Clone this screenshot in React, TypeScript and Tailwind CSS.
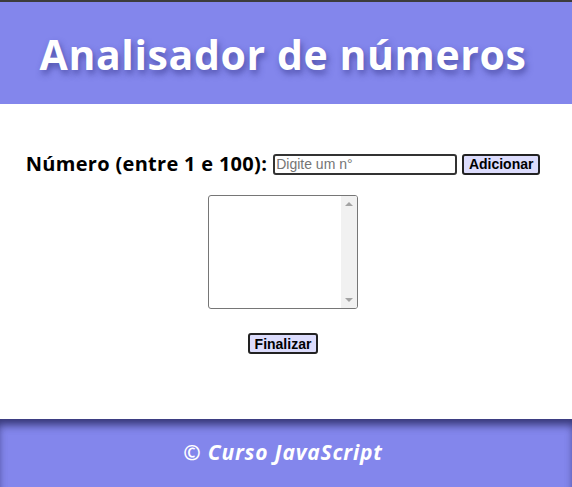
import { useState } from "react";

export default function App() {
  const [valor, setValor] = useState("");

  return (
    <div className="w-[572px] h-[487px] flex flex-col bg-white font-['Liberation_Sans',Arial,sans-serif]">
      {/* Header */}
      <header className="h-[104px] shrink-0 border-t-2 border-[#3c3c3c] bg-[#8386ec] flex items-center justify-center pr-[6px]">
        <h1 className="text-white font-['Open_Sans',sans-serif] font-bold text-[41px] tracking-[0.6px] leading-none pt-[2px] [text-shadow:2px_4px_6px_rgba(40,40,120,0.55)]">
          Analisador de números
        </h1>
      </header>

      {/* Main */}
      <main className="flex-1 flex flex-col items-center pt-[46px] pr-[6px]">
        <div className="flex items-center h-[28px]">
          <label
            htmlFor="num"
            className="font-['Open_Sans',sans-serif] font-bold text-[20px] tracking-[0.3px] text-black mr-[6px]"
          >
            Número (entre 1 e 100):
          </label>
          <input
            id="num"
            type="number"
            value={valor}
            onChange={(e) => setValor(e.target.value)}
            placeholder="Digite um n°"
            className="w-[184px] h-[21px] border-2 border-[#333] rounded-[3px] px-[1px] text-[14px] text-black placeholder:text-[#757575] outline-none [appearance:textfield] [&::-webkit-inner-spin-button]:appearance-none"
          />
          <button className="ml-[5px] w-[78px] h-[21px] bg-[#dcdcfc] border-2 border-[#222] rounded-[3px] text-[14px] font-bold text-black leading-none">
            Adicionar
          </button>
        </div>

        {/* Lista */}
        <div className="mt-[17px] w-[150px] h-[114px] border border-[#767676] rounded-[3px] bg-white flex overflow-hidden">
          <div className="flex-1" />
          <div className="w-[16px] bg-[#f1f1f1] flex flex-col items-center justify-between py-[6px]">
            <span className="w-0 h-0 border-l-[4px] border-r-[4px] border-b-[4px] border-l-transparent border-r-transparent border-b-[#a3a3a3]" />
            <span className="w-0 h-0 border-l-[4px] border-r-[4px] border-t-[4px] border-l-transparent border-r-transparent border-t-[#a3a3a3]" />
          </div>
        </div>

        <button className="mt-[24px] w-[70px] h-[21px] bg-[#dcdcfc] border-2 border-[#222] rounded-[3px] text-[14px] font-bold text-black leading-none">
          Finalizar
        </button>
      </main>

      {/* Footer */}
      <footer className="h-[68px] shrink-0 bg-[#8386ec] flex items-center justify-center pr-[6px] shadow-[inset_0_8px_8px_-2px_rgba(30,30,80,0.75)]">
        <p className="text-white font-['Open_Sans',sans-serif] font-bold italic text-[21px] tracking-[0.8px]">
          © Curso JavaScript
        </p>
      </footer>
    </div>
  );
}
